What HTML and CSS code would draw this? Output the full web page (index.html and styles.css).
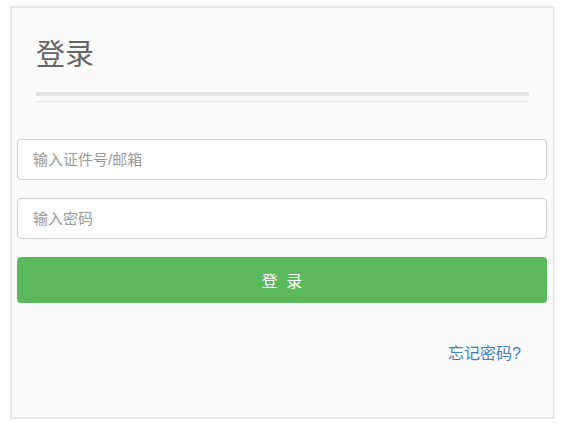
FILE: index.html
```html
<!DOCTYPE html>
<html lang="zh-CN">
<head>
    <meta charset="UTF-8">
    <meta name="viewport" content="width=device-width, initial-scale=1.0">
    <title>登录</title>
    <link rel="stylesheet" href="styles.css">
</head>
<body>
    <div class="panel">
        <!-- 标题 -->
        <div class="panel-head">
            <h1>登录</h1>
            <div class="rule-thick"></div>
            <div class="rule-thin"></div>
        </div>

        <!-- 表单 -->
        <form class="login-form">
            <input type="text" placeholder="输入证件号/邮箱">
            <input type="password" placeholder="输入密码">
            <button type="button" class="btn-login">登 录</button>
        </form>

        <div class="forgot">
            <a href="#">忘记密码?</a>
        </div>
    </div>
</body>
</html>
```

FILE: styles.css
```css
* {
    box-sizing: border-box;
}
body {
    margin: 0;
    padding: 6px 0 0 10px;
    font-family: "Liberation Sans", "Noto Sans CJK SC", sans-serif;
    background: #fff;
}
.panel {
    width: 545px;
    height: 413px;
    background: #fafafa;
    border: 2px solid #e8e8e8;
    padding: 0 6px 0 5px;
}
.panel-head {
    padding: 27px 18px 0 19px;
}
h1 {
    margin: 0;
    font-size: 29px;
    line-height: 40px;
    font-weight: normal;
    color: #666;
}
.rule-thick {
    margin-top: 17px;
    height: 4px;
    background: #e4e4e4;
}
.rule-thin {
    margin-top: 5px;
    height: 1px;
    background: #e6e6e6;
}
.login-form {
    margin: 37px 0 0;
    display: flex;
    flex-direction: column;
    gap: 18px;
}
.login-form input {
    height: 41px;
    padding: 0 15px;
    border: 1px solid #cfcfcf;
    border-radius: 4px;
    background: #fff;
    font-family: inherit;
    font-size: 15px;
    color: #555;
}
.login-form input::placeholder {
    color: #999;
}
.btn-login {
    height: 46px;
    border: none;
    border-radius: 4px;
    background: #5cb85c;
    color: #fff;
    font-family: inherit;
    font-size: 16px;
    letter-spacing: 2px;
    text-indent: 2px;
    cursor: pointer;
}
.forgot {
    margin-top: 40px;
    padding-right: 26px;
    text-align: right;
    font-size: 16px;
    line-height: 22px;
}
.forgot a {
    color: #3f7fc0;
    text-decoration: none;
}
```
